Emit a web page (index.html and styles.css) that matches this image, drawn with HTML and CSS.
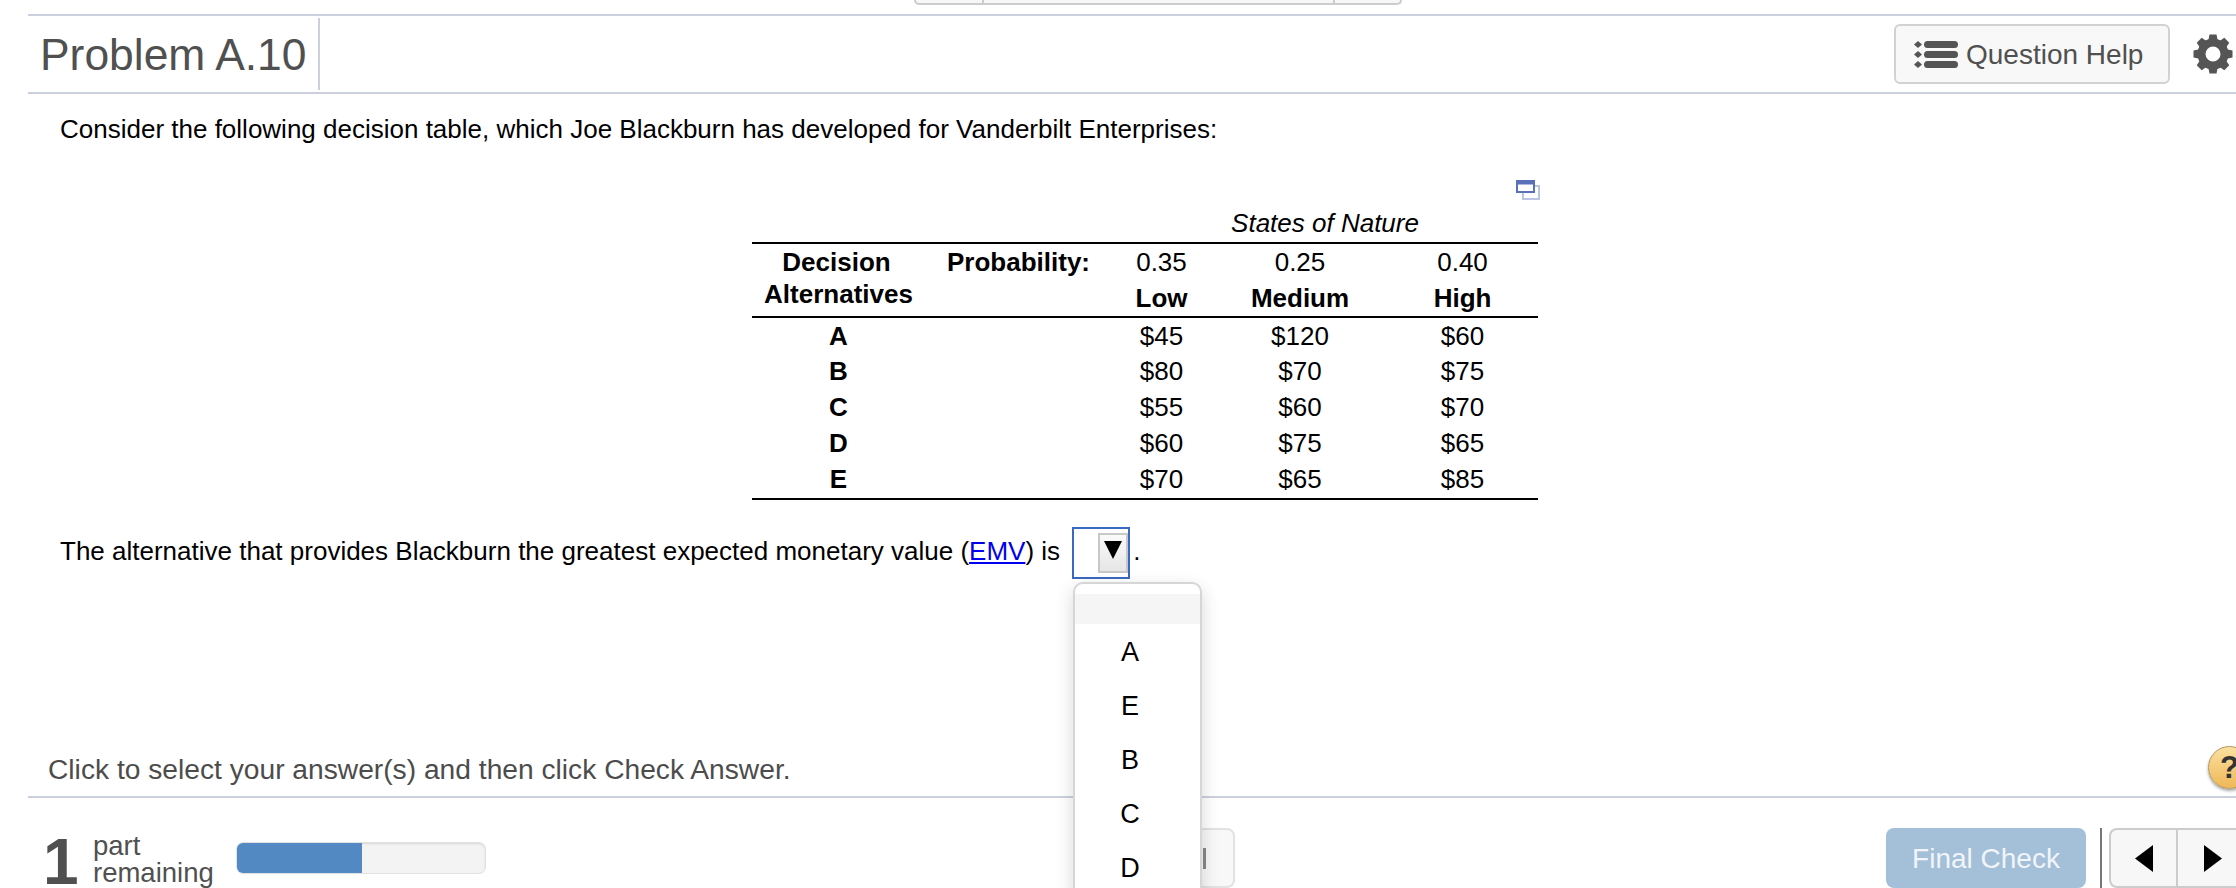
FILE: index.html
```html
<!DOCTYPE html>
<html lang="en">
<head>
<meta charset="utf-8">
<title>Problem A.10</title>
<link rel="stylesheet" href="styles.css">
</head>
<body>
<div class="page">
  <div class="toptabs"><span class="tab tab-a"></span><span class="tab tab-b"></span><span class="tab tab-c"></span></div>
  <header class="head">
    <h1 class="title">Problem A.10</h1>
    <div class="head-tools">
      <button class="help-btn">
        <svg class="list-icon" viewBox="0 0 44 27" width="44" height="27"><g fill="#555"><path d="M4 0l4 3.500-4 3.500-4-3.500z"/><path d="M4 10l4 3.500-4 3.500-4-3.500z"/><path d="M4 20l4 3.500-4 3.500-4-3.500z"/><rect x="10" y="0" width="34" height="7" rx="3.500"/><rect x="10" y="10" width="34" height="7" rx="3.500"/><rect x="10" y="20" width="34" height="7" rx="3.500"/></g></svg>
        <span class="help-text">Question Help</span>
      </button>
      <svg class="gear" viewBox="0 0 40 40" width="40" height="40">
        <circle cx="20" cy="20" r="11.500" fill="none" stroke="#555" stroke-width="8"/>
        <g fill="#555">
          <path d="M16.500 .5h7l1.200 6h-9.400z"/>
          <path d="M16.500 .5h7l1.200 6h-9.400z" transform="rotate(45 20 20)"/>
          <path d="M16.500 .5h7l1.200 6h-9.400z" transform="rotate(90 20 20)"/>
          <path d="M16.500 .5h7l1.200 6h-9.400z" transform="rotate(135 20 20)"/>
          <path d="M16.500 .5h7l1.200 6h-9.400z" transform="rotate(180 20 20)"/>
          <path d="M16.500 .5h7l1.200 6h-9.400z" transform="rotate(225 20 20)"/>
          <path d="M16.500 .5h7l1.200 6h-9.400z" transform="rotate(270 20 20)"/>
          <path d="M16.500 .5h7l1.200 6h-9.400z" transform="rotate(315 20 20)"/>
        </g>
      </svg>
    </div>
  </header>

  <main class="content">
    <p class="intro">Consider the following decision table, which Joe Blackburn has developed for Vanderbilt Enterprises:</p>
    <div class="table-wrap">
      <div class="enlarge">
        <svg viewBox="0 0 24 20" width="24" height="20"><path d="M7 6h16v13H7z" fill="#fff" stroke="#b9c5e2" stroke-width="2"/><rect x="1" y="1" width="17" height="11" fill="#fff" stroke="#5a70b8" stroke-width="2"/><rect x="1" y="1" width="17" height="3.500" fill="#5a70b8"/></svg>
      </div>
      <table class="decision">
        <colgroup><col class="c1"><col class="c2"><col class="c3"><col class="c4"><col class="c5"></colgroup>
        <thead>
          <tr class="r-states"><td colspan="2"></td><td colspan="3" class="states">States of Nature</td></tr>
          <tr class="r-prob"><th class="ctr dec">Decision</th><th class="prob">Probability:</th><td>0.35</td><td>0.25</td><td class="last">0.40</td></tr>
          <tr class="r-names"><th class="ctr alt">Alternatives</th><th></th><th>Low</th><th>Medium</th><th class="last">High</th></tr>
        </thead>
        <tbody>
          <tr><th class="ctr">A</th><td></td><td>$45</td><td>$120</td><td class="last">$60</td></tr>
          <tr><th class="ctr">B</th><td></td><td>$80</td><td>$70</td><td class="last">$75</td></tr>
          <tr><th class="ctr">C</th><td></td><td>$55</td><td>$60</td><td class="last">$70</td></tr>
          <tr><th class="ctr">D</th><td></td><td>$60</td><td>$75</td><td class="last">$65</td></tr>
          <tr><th class="ctr">E</th><td></td><td>$70</td><td>$65</td><td class="last">$85</td></tr>
        </tbody>
      </table>
    </div>
    <p class="question">The alternative that provides Blackburn the greatest expected monetary value (<a class="term" href="#">EMV</a>) is <span class="select"><span class="select-btn"><svg viewBox="0 0 18 18" width="18" height="18"><path d="M0 0h18L9 18z" fill="#000"/></svg></span></span><span class="dot">.</span></p>
    <ul class="menu">
      <li class="opt blank"></li>
      <li class="opt">A</li>
      <li class="opt">E</li>
      <li class="opt">B</li>
      <li class="opt">C</li>
      <li class="opt">D</li>
    </ul>
  </main>

  <div class="hintbar">
    <span class="hint">Click to select your answer(s) and then click Check Answer.</span>
    <span class="qmark">?</span>
  </div>

  <footer class="foot">
    <div class="parts">
      <span class="count">1</span>
      <span class="parts-label">part<br>remaining</span>
      <div class="progress"><div class="progress-fill"></div></div>
    </div>
    <div class="mid-btn"><span class="mid-bar"></span></div>
    <div class="foot-right">
      <button class="final"><span class="final-text">Final Check</span></button>
      <span class="sep"></span>
      <div class="nav">
        <span class="nav-cell"><svg viewBox="0 0 18 27" width="18" height="27"><path d="M18 0v27L0 13.500z" fill="#000"/></svg></span>
        <span class="nav-cell"><svg viewBox="0 0 18 27" width="18" height="27"><path d="M0 0v27l18-13.500z" fill="#000"/></svg></span>
      </div>
    </div>
  </footer>
</div>
</body>
</html>
```
FILE: styles.css
```css
* { box-sizing: border-box; }
html, body { margin: 0; padding: 0; background: #fff; }
body { font-family: "Liberation Sans", Arial, sans-serif; color: #000; }
.page { position: relative; width: 2236px; height: 888px; overflow: hidden; display: flex; flex-direction: column; }

.toptabs { display: flex; width: 488px; height: 5px; margin-left: 914px; margin-bottom: 9px; border: 2px solid #ccc; border-top: 0; border-radius: 0 0 7px 7px; background: #f7f7f7; }
.tab { display: block; height: 100%; }
.tab-a { width: 68px; border-right: 2px solid #ccc; }
.tab-b { width: 351px; border-right: 2px solid #ccc; }
.tab-c { flex: 1; }

.head { margin-left: 28px; height: 80px; border-top: 2px solid #ccd0de; border-bottom: 2px solid #ccd0de; display: flex; justify-content: space-between; align-items: center; }
.title { margin: 0; height: 72px; width: 292px; padding: 1px 0 0 12px; border-right: 2px solid #ccd0de; font-weight: 400; font-size: 44.400px; line-height: 72px; color: #505050; white-space: nowrap; }
.head-tools { display: flex; align-items: center; gap: 23px; margin-right: 3px; }
.help-btn { display: flex; align-items: center; gap: 8px; width: 276px; height: 60px; padding: 0 0 0 18px; border: 2px solid #d2d2d2; border-radius: 6px; background: #f8f8f8; font: 400 28px "Liberation Sans", Arial, sans-serif; color: #505050; }
.help-text { position: relative; top: 1px; }
.list-icon { flex: none; }
.gear { display: block; }

.content { position: relative; height: 623px; margin: 0; display: flex; flex-direction: column; }
.intro { margin: 17px 0 0 60px; font-size: 26px; line-height: 36px; }
.table-wrap { margin: 33px 0 0 752px; width: 786px; }
.enlarge { display: flex; justify-content: flex-end; height: 25px; margin-right: -2px; }
.decision { border-collapse: collapse; table-layout: fixed; width: 786px; margin-top: 0; }
.decision .c1 { width: 173px; } .decision .c2 { width: 187px; } .decision .c3 { width: 99px; } .decision .c4 { width: 178px; } .decision .c5 { width: 149px; }
.decision th, .decision td { padding: 0; text-align: center; font-size: 26px; line-height: 30px; }
.decision th { font-weight: 700; }
.decision .states { font-style: italic; height: 38px; padding-bottom: 2px; }
.decision .last { padding-right: 2px; }
.decision th.dec { padding-right: 4px; }
.r-states td { border-bottom: 2px solid #000; }
.r-prob th, .r-prob td { height: 36px; vertical-align: middle; }
.decision th.prob { text-align: left; padding-left: 22px; }
.r-names th { height: 38px; vertical-align: middle; border-bottom: 2px solid #000; }
.decision th.alt { vertical-align: top; }
.decision tbody tr { height: 36px; }
.decision tbody tr:last-child { height: 38px; }
.decision tbody tr:last-child th, .decision tbody tr:last-child td { border-bottom: 2px solid #000; padding-bottom: 1px; }
.question { margin: 0 0 0 60px; position: absolute; top: 433px; left: 0; font-size: 26px; line-height: 36px; white-space: nowrap; }
.term { color: #00e; text-decoration: underline; }
.select { display: inline-block; vertical-align: middle; position: relative; width: 58px; height: 52px; margin-left: 5px; border: 2px solid #3a69c2; background: #fff; }
.select-btn { position: absolute; top: 4px; right: 0; width: 30px; height: 40px; border: 2px solid #c8c8c8; background: linear-gradient(#fafafa, #e6e6e6); display: flex; justify-content: center; padding-top: 6px; }
.dot { margin-left: 3px; }

.menu { position: absolute; z-index: 5; left: 1073px; top: 488px; width: 129px; height: 360px; margin: 0; padding: 10px 0 0; list-style: none; background: #fff; border: 2px solid #d6d6d6; border-radius: 10px 10px 0 0; box-shadow: 0 6px 18px rgba(0,0,0,.16); }
.opt { height: 54px; line-height: 54px; text-align: center; font-size: 27px; padding-right: 15px; }
.opt.blank { height: 30px; background: #f5f5f5; margin-bottom: 1px; }

.hintbar { position: absolute; left: 28px; right: 0; top: 0; height: 798px; border-bottom: 2px solid #ccd0de; pointer-events: none; }
.hint { position: absolute; left: 20px; top: 751px; font-size: 28.200px; line-height: 36px; color: #4c4c4c; white-space: nowrap; }
.qmark { position: absolute; left: 2180px; top: 746px; width: 43px; height: 43px; border-radius: 50%; border: 1px solid #b4965a; background: linear-gradient(#fbe0a0, #eeb858); box-shadow: 0 2px 3px rgba(0,0,0,.35); color: #333; font: 700 31px/41px "Liberation Sans", Arial, sans-serif; text-align: center; }

.foot { position: absolute; left: 0; right: 0; top: 828px; height: 60px; display: flex; align-items: flex-start; }
.parts { display: flex; align-items: flex-start; margin-left: 43px; width: 443px; }
.count { display: block; width: 50px; height: 52px; margin-top: 8px; font-size: 64px; line-height: 52px; font-weight: 700; color: #505050; letter-spacing: -2px; }
.parts-label { display: block; width: 143px; margin-top: 4px; font-size: 27.500px; line-height: 27px; color: #505050; }
.progress { width: 250px; height: 32px; margin-top: 14px; border: 1px solid #e2e2e2; border-radius: 7px; background: #f3f3f3; overflow: hidden; box-shadow: inset 0 1px 2px rgba(0,0,0,.12); }
.progress-fill { width: 50.400%; height: 100%; background: #5289c3; }
.mid-btn { position: absolute; left: 1100px; top: 0; width: 135px; height: 60px; border: 2px solid #e2e2e2; border-radius: 8px; background: #f8f8f8; }
.mid-bar { position: absolute; right: 27px; top: 18px; width: 3px; height: 21px; background: #8a8a8a; }
.foot-right { position: absolute; left: 1886px; top: 0; display: flex; align-items: stretch; height: 60px; }
.final { width: 200px; height: 60px; padding: 0; border: 0; border-radius: 8px; background: #a4bfd8; color: #f1f5f9; font: 400 28px "Liberation Sans", Arial, sans-serif; }
.final-text { position: relative; top: 1px; }
.sep { width: 2px; margin-left: 14px; background: #777; }
.nav { display: flex; width: 140px; height: 60px; margin-left: 7px; border: 2px solid #ccc; border-right: 0; border-radius: 8px 0 0 8px; background: #f7f7f7; }
.nav-cell { display: flex; align-items: center; justify-content: center; height: 100%; }
.nav-cell:first-child { width: 67px; border-right: 2px solid #ccc; }
.nav-cell:last-child { width: 69px; }
```
